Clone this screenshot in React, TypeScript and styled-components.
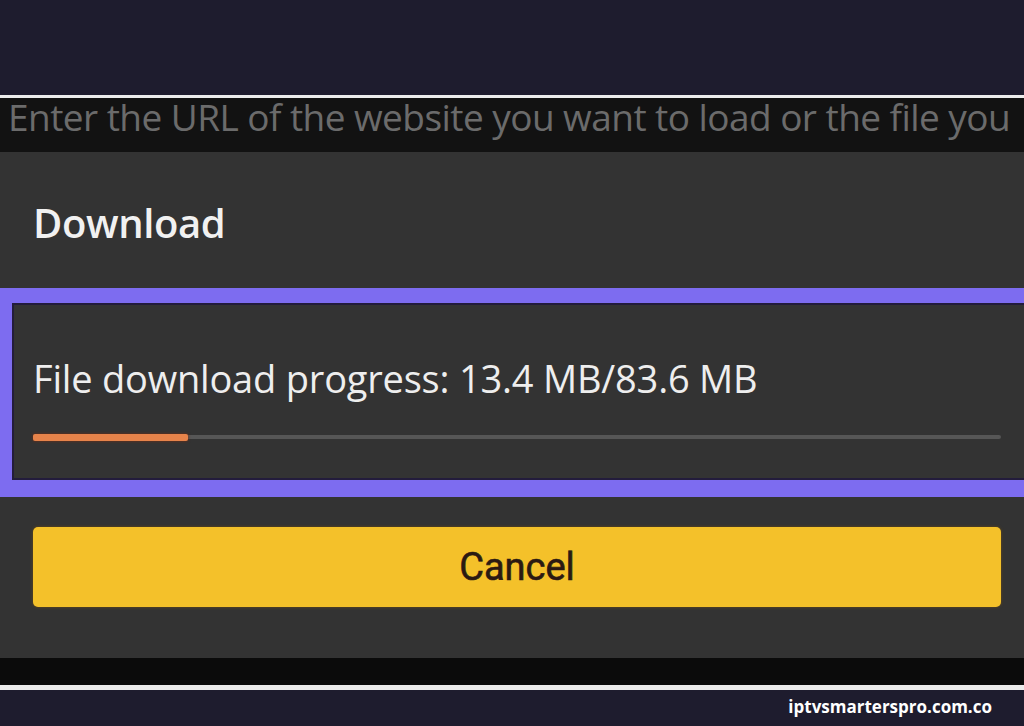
import React from "react";
import styled, { createGlobalStyle } from "styled-components";

const GlobalStyle = createGlobalStyle`
  html, body {
    margin: 0;
    padding: 0;
    background: #1e1c2e;
  }
  body {
    width: 1024px;
    height: 726px;
    overflow: hidden;
    font-family: "Open Sans", "Noto Sans", sans-serif;
  }
`;

const Page = styled.div`
  width: 1024px;
  height: 726px;
  display: flex;
  flex-direction: column;
  background: #1e1c2e;
  overflow: hidden;
`;

const NavyBand = styled.div<{ $height: number }>`
  height: ${(p) => p.$height}px;
  flex-shrink: 0;
  background: #1e1c2e;
`;

const Rule = styled.div<{ $height: number }>`
  height: ${(p) => p.$height}px;
  flex-shrink: 0;
  background: #ececec;
`;

const UrlBar = styled.div`
  height: 54px;
  flex-shrink: 0;
  background: #121212;
  display: flex;
  align-items: flex-start;
  padding-left: 8px;
  white-space: nowrap;
`;

const UrlHint = styled.span`
  font-family: "Open Sans", "Noto Sans", sans-serif;
  font-size: 37px;
  line-height: 38px;
  color: #6b6b6b;
  letter-spacing: -0.55px;
`;

const Dialog = styled.div`
  height: 506px;
  flex-shrink: 0;
  background: #333333;
  display: flex;
  flex-direction: column;
`;

const TitleRow = styled.div`
  height: 136px;
  display: flex;
  align-items: center;
  padding-left: 33px;
`;

const Title = styled.h2`
  margin: 0;
  font-family: "Open Sans", "Noto Sans", sans-serif;
  font-size: 40px;
  font-weight: 600;
  color: #f1f1f1;
  letter-spacing: -0.4px;
  margin-top: 4px;
`;

const ProgressPanel = styled.div`
  height: 177px;
  border-top: 15px solid #7d6cf0;
  border-bottom: 17px solid #7d6cf0;
  border-left: 12px solid #7d6cf0;
  box-shadow: inset 2px 2px 0 #231c3c, inset 0 -2px 0 #231c3c;
  display: flex;
  flex-direction: column;
  padding-left: 21px;
  padding-right: 23px;
`;

const ProgressLabel = styled.div`
  margin-top: 55px;
  font-family: "Open Sans", "Noto Sans", sans-serif;
  font-size: 38px;
  line-height: 40px;
  color: #eeeeee;
  letter-spacing: -0.2px;
`;

const Track = styled.div`
  margin-top: 37px;
  height: 4px;
  background: #565656;
  border-radius: 2px;
  display: flex;
  align-items: center;
`;

const Fill = styled.div`
  height: 7px;
  background: #e7834a;
  border-radius: 2px;
  box-shadow: 0 0 3px #7a2c10;
`;

const ButtonRow = styled.div`
  padding: 30px 23px 0 33px;
`;

const CancelButton = styled.button`
  width: 100%;
  height: 80px;
  border: none;
  border-radius: 5px;
  background: #f4c12a;
  box-shadow: 0 0 3px #6b4a10;
  font-family: Roboto, "Liberation Sans", sans-serif;
  font-size: 38px;
  font-weight: 400;
  color: #2b1a12;
  -webkit-text-stroke: 0.6px #2b1a12;
  cursor: pointer;
  display: flex;
  align-items: center;
  justify-content: center;
  padding: 0;
`;

const BlackBand = styled.div`
  height: 27px;
  flex-shrink: 0;
  background: #0b0b0b;
`;

const Footer = styled.div`
  height: 36px;
  flex-shrink: 0;
  background: #1e1c2e;
  display: flex;
  align-items: center;
  justify-content: flex-end;
  padding-right: 32px;
`;

const Domain = styled.span`
  font-family: "Open Sans", "Noto Sans", sans-serif;
  font-size: 17px;
  font-weight: 700;
  color: #ffffff;
  margin-top: -4px;
`;

const downloaded = 13.4;
const total = 83.6;

export default function App() {
  const pct = (downloaded / total) * 100;
  return (
    <Page>
      <GlobalStyle />
      <NavyBand $height={95} />
      <Rule $height={3} />
      <UrlBar>
        <UrlHint>
          Enter the URL of the website you want to load or the file you
        </UrlHint>
      </UrlBar>
      <Dialog>
        <TitleRow>
          <Title>Download</Title>
        </TitleRow>
        <ProgressPanel>
          <ProgressLabel>
            File download progress: {downloaded} MB/{total} MB
          </ProgressLabel>
          <Track>
            <Fill style={{ width: `${pct}%` }} />
          </Track>
        </ProgressPanel>
        <ButtonRow>
          <CancelButton>Cancel</CancelButton>
        </ButtonRow>
      </Dialog>
      <BlackBand />
      <Rule $height={5} />
      <Footer>
        <Domain>iptvsmarterspro.com.co</Domain>
      </Footer>
    </Page>
  );
}
